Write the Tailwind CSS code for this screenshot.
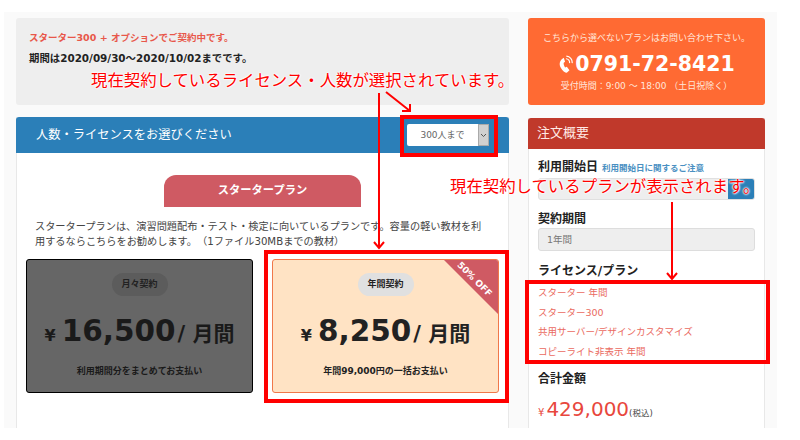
<!DOCTYPE html>
<html lang="ja">
<head>
    <meta charset="UTF-8">
    <title>ライセンス選択</title>
    <script src="https://cdn.jsdelivr.net/npm/@tailwindcss/browser@4"></script>
</head>
<body class="bg-white font-['DejaVu_Sans','Noto_Sans_CJK_JP',sans-serif] text-[#222]">
<div class="relative w-[800px] h-[440px] overflow-hidden">

    <!-- Page panel -->
    <div class="ml-1 mt-3 w-[773px] h-[416px] bg-[#fafafa] flex gap-[19px] pl-3 pt-1.5">

        <!-- Left column -->
        <div class="w-[493px] flex flex-col">
            <div class="h-[87px] bg-[#eeeeee] rounded-[3px] pl-[13px] pt-[13px]">
                <p class="text-[9.5px] leading-[14px] font-bold text-[#e8574a]">スターター300 + オプションでご契約中です。</p>
                <p class="text-[10.4px] leading-[14px] font-bold mt-1.5">期間は2020/09/30～2020/10/02までです。</p>
            </div>

            <div class="mt-3 flex-1 bg-white border-x border-[#e8e8e8]">
                <div class="-mx-px h-9 bg-[#2b7fb8] rounded-t-[3px] flex items-center justify-between pl-5 pr-5">
                    <span class="text-white text-[12.25px]">人数・ライセンスをお選びください</span>
                    <div class="flex w-[82px] h-[22px] bg-white rounded-[2px]">
                        <span class="flex-1 text-center text-[9px] leading-[22px] text-[#666]">300人まで</span>
                        <span class="w-[11px] bg-[#d0d0d0] border border-[#aaa] flex items-center justify-center">
                            <svg width="7" height="5" viewBox="0 0 7 5" fill="none" stroke="#555"><path d="M1 1l2.500 2.500L6 1"/></svg>
                        </span>
                    </div>
                </div>

                <div class="flex justify-center mt-[22px]">
                    <div class="w-[197px] h-8 bg-[#cf5a63] rounded-t-[12px] text-center text-white font-bold text-[11.25px] leading-[31px]">スタータープラン</div>
                </div>

                <p class="mx-[18px] mt-[12px] text-[10.2px] leading-[15px] text-[#444] [text-spacing-trim:space-all]">スタータープランは、演習問題配布・テスト・検定に向いているプランです。容量の軽い教材を利用するならこちらをお勧めします。（1ファイル30MBまでの教材）</p>

                <div class="flex gap-[19px] ml-[9px] mt-[10px]">
                    <div class="w-[227px] h-[134px] bg-[#666666] border border-black rounded-[3px] flex flex-col items-center pt-[13px]">
                        <span class="w-14 h-[23px] rounded-full bg-[#5c5c5c] text-center text-[9px] leading-[23px] font-bold text-[#222]">月々契約</span>
                        <div class="mt-[14px] h-[42px] flex items-baseline font-bold text-[#1a1a1a]">
                            <span class="text-[16px] mr-1.5">¥</span>
                            <span class="text-[29.5px] leading-[42px]">16,500</span>
                            <span class="text-[21px] ml-0.5">/ 月間</span>
                        </div>
                        <span class="mt-[13px] text-[9px] font-bold text-[#1a1a1a]">利用期間分をまとめてお支払い</span>
                    </div>
                    <div class="relative w-[227px] h-[134px] bg-[#ffe3c4] border border-[#f0784a] rounded-[3px] flex flex-col items-center pt-[13px] overflow-hidden">
                        <span class="w-14 h-[23px] rounded-full bg-[#e0e0e0] text-center text-[9px] leading-[23px] font-bold">年間契約</span>
                        <div class="mt-[14px] h-[42px] flex items-baseline font-bold">
                            <span class="text-[16px] mr-1.5">¥</span>
                            <span class="text-[29.5px] leading-[42px]">8,250</span>
                            <span class="text-[21px] ml-0.5">/ 月間</span>
                        </div>
                        <span class="mt-[13px] text-[9px] font-bold">年間99,000円の一括お支払い</span>
                        <!-- Corner ribbon -->
                        <div class="absolute top-0 right-0 w-0 h-0 border-t-[54px] border-l-[54px] border-t-[#cf5a63] border-l-transparent"></div>
                        <span class="absolute top-[15px] right-[1px] rotate-45 text-white text-[9px] font-bold leading-none">50% OFF</span>
                    </div>
                </div>
            </div>
        </div>

        <!-- Right column -->
        <div class="w-[237px] flex flex-col">
            <div class="h-[87px] bg-[#ff6a33] rounded-[3px] flex flex-col items-center text-white pt-[13px]">
                <p class="text-[9px] leading-[14px] text-[#ffe6da]">こちらから選べないプランはお問い合わせ下さい。</p>
                <div class="mt-1.5 flex items-center h-[26px]">
                    <svg width="15" height="20" viewBox="0 0 17 22" fill="none" class="mr-0.5">
                        <path d="M5 5 C2 7 1 11 3 15 C5 19 8 21 10 21 L13 18 L10 14 L8 15 C7 13 6 11 6.500 9.500 L8 8.500 L6.500 4 Z" fill="#fff"/>
                        <path d="M9 5a4 4 0 0 1 4 5M9.500 2a7 7 0 0 1 6.500 8" stroke="#fff" stroke-width="1.300"/>
                    </svg>
                    <span class="text-[20.5px] font-bold leading-none">0791-72-8421</span>
                </div>
                <p class="mt-[3px] text-[9px] leading-[13px] text-[#ffe6da]">受付時間：9:00 ～ 18:00 （土日祝除く）</p>
            </div>

            <div class="mt-[13px] flex-1 bg-white border-x border-[#e8e8e8]">
                <div class="-mx-px h-[31px] bg-[#c0392b] rounded-t-[3px] pl-[9px] text-[13px] leading-[30px] text-[#ffe9e5]">注文概要</div>
                <div class="px-[9px]">
                    <div class="mt-[10px] flex items-baseline gap-1">
                        <span class="text-[12px] leading-[16px] font-bold">利用開始日</span>
                        <span class="text-[8.5px] font-bold text-[#4a90c2]">利用開始日に関するご注意</span>
                    </div>
                    <div class="mt-[3px] h-[22px] flex bg-[#eeeeee] border border-[#e0e0e0] rounded-[3px] overflow-hidden">
                        <span class="flex-1"></span>
                        <span class="w-[26px] bg-[#2b7fb8]"></span>
                    </div>
                    <p class="mt-[11px] text-[12px] leading-[16px] font-bold">契約期間</p>
                    <div class="mt-[1px] h-[23px] bg-[#eeeeee] border border-[#dddddd] rounded-[3px] pl-2 text-[9.5px] leading-[21px] text-[#777]">1年間</div>
                    <p class="mt-[12px] text-[12px] leading-[16px] font-bold">ライセンス/プラン</p>
                    <ul class="mt-[4px] text-[9.5px] leading-[19.5px] text-[#ea6a60]">
                        <li>スターター 年間</li>
                        <li>スターター300</li>
                        <li>共用サーバー/デザインカスタマイズ</li>
                        <li>コピーライト非表示 年間</li>
                    </ul>
                    <p class="mt-[10px] text-[12px] leading-[16px] font-bold">合計金額</p>
                    <div class="mt-[9px] flex items-baseline text-[#e8473d]">
                        <span class="text-[10px] mr-0.5">¥</span>
                        <span class="text-[20px] leading-[26px]">429,000</span>
                        <span class="text-[8.5px] text-[#444]">(税込)</span>
                    </div>
                </div>
            </div>
        </div>
    </div>

    <!-- Annotations laid over the screenshot -->
    <div class="absolute left-[91px] top-[70px] text-[16.4px] leading-[22px] text-[#ff0000] whitespace-nowrap [text-shadow:0_0_2px_#fff,0_0_2px_#fff,0_0_2px_#fff,0_0_3px_#fff]">現在契約しているライセンス・人数が選択されています。</div>
    <div class="absolute left-[450px] top-[176px] text-[16.4px] leading-[22px] text-[#ff0000] whitespace-nowrap [text-shadow:0_0_2px_#fff,0_0_2px_#fff,0_0_2px_#fff,0_0_3px_#fff]">現在契約しているプランが表示されます。</div>

    <div class="absolute left-[400px] top-[115px] w-[98px] h-[42px] border-[4px] border-[#ff0000]"></div>
    <div class="absolute left-[264px] top-[250px] w-[245px] h-[153px] border-[4px] border-[#ff0000]"></div>
    <div class="absolute left-[525px] top-[280px] w-[245px] h-[84px] border-[4px] border-[#ff0000]"></div>

    <svg class="absolute left-0 top-0" width="800" height="440" fill="none" stroke="#ff0000" stroke-width="2">
        <path d="M386 92L410 111M410 104V111H402"/>
        <path d="M379 93V248M374 242L379 248L384 242"/>
        <path d="M672 202V279M667 273L672 279L677 273"/>
    </svg>
</div>
</body>
</html>
